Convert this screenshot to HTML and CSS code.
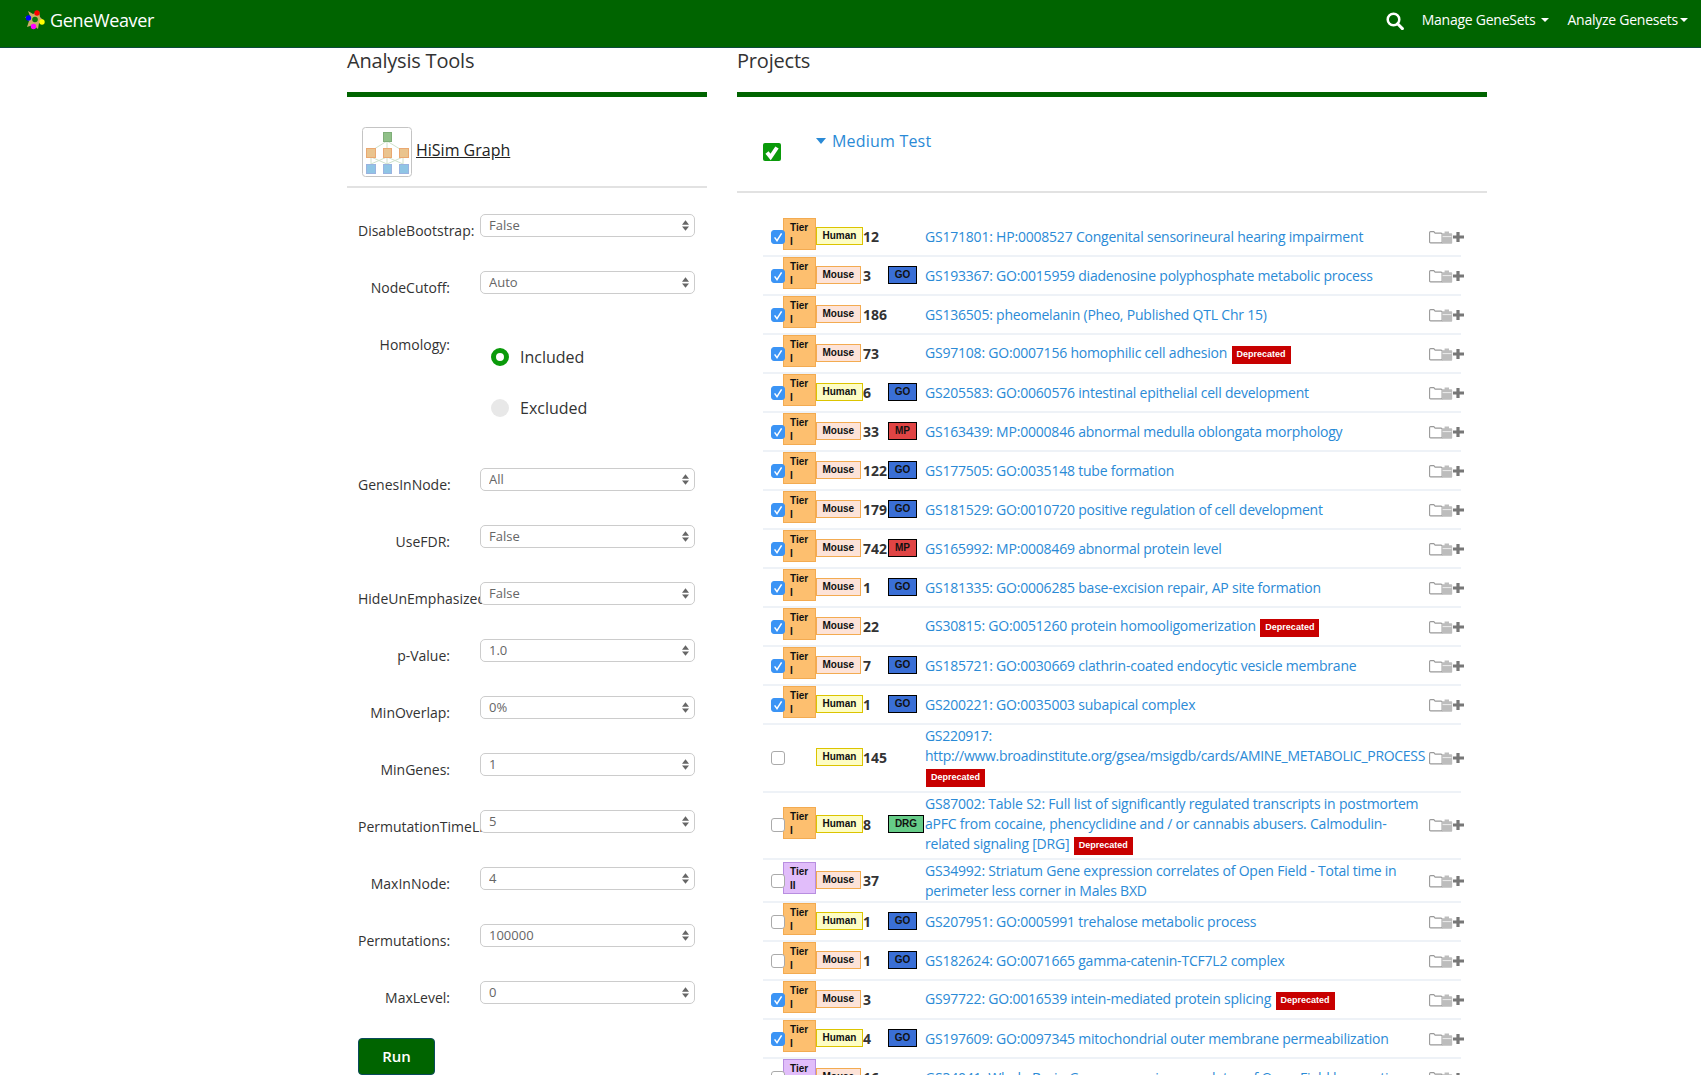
FILE: index.html
```html
<!DOCTYPE html>
<html lang="en">
<head>
<meta charset="utf-8">
<title>GeneWeaver</title>
<link rel="stylesheet" href="styles.css">
</head>
<body>
<svg class="defs" width="0" height="0" aria-hidden="true">
  <symbol id="tick" viewBox="0 0 14 14"><path d="M3.6 7.4 6 10.6 10.6 3.4" fill="none" stroke="#fff" stroke-width="1.5"/></symbol>
  <symbol id="acts" viewBox="0 0 37 14">
    <path d="M.6 12.4V2.6q0-1 1-1h3.2l1.3 1.5h6q1 0 1 1v8.8H1.6q-1 0-1-1.5z" fill="#fff" stroke="#999" stroke-width="1.1"/>
    <path d="M13 3.2h2.6V1.6h4.4v1.6h2.4q.8 0 .8.8v9q0 .8-.8.8H13z" fill="#bdbdbd"/>
    <path d="M13.6 6.6h8.8" stroke="#fff" stroke-width=".7"/>
    <path d="M29 2v10M24 7h11" stroke="#777" stroke-width="3.2"/>
  </symbol>
</svg>
<nav class="navbar">
  <a class="brand">
    <svg class="logo" viewBox="0 0 22 22" width="22" height="22" aria-hidden="true">
      <path d="M4 2 9 5 15 2 16 8 20 12 15 14 14 20 9 16 3 18 5 12 1 8 6 7z" fill="#c9ae67"/>
      <circle cx="13" cy="4" r="2.7" fill="#f00"/>
      <circle cx="4.5" cy="9" r="2.7" fill="#00f"/>
      <circle cx="18" cy="13" r="2.7" fill="#ff0"/>
      <circle cx="9.5" cy="17.5" r="2.7" fill="#f0f"/>
      <circle cx="11" cy="10.5" r="2.8" fill="#0a7a0a"/>
    </svg>
    <span>GeneWeaver</span>
  </a>
  <div class="nav-right">
    <svg class="search" viewBox="0 0 18 18" width="18" height="18" aria-hidden="true">
      <circle cx="7.5" cy="7.5" r="5.8" fill="none" stroke="#fff" stroke-width="2.5"/>
      <path d="M11.6 11.8 16.4 16.6" stroke="#fff" stroke-width="3" stroke-linecap="round"/>
    </svg>
    <a class="nav-link nav-manage">Manage GeneSets<i class="caret"></i></a>
    <a class="nav-link">Analyze Genesets<i class="caret caret-tight"></i></a>
  </div>
</nav>

<main class="page">
  <section class="tools">
    <h2 class="title">Analysis Tools</h2>
    <div class="tool-head">
      <svg class="tool-icon" viewBox="0 0 50 50" width="50" height="50" aria-hidden="true">
        <rect x=".5" y=".5" width="49" height="49" rx="3" fill="#fff" stroke="#c4c4c4"/>
        <path d="M25 14 9 24M25 14V24M25 14 41 24M9 30V37M25 30V37M41 30V37M9 30 25 37M25 30 9 37M25 30 41 37M41 30 25 37" stroke="#cfe2cc" fill="none"/>
        <rect x="21.5" y="5.5" width="8" height="9" fill="#90c088" stroke="#7fae78"/>
        <rect x="4.5" y="21.5" width="9" height="9" fill="#eac48e" stroke="#eaa871"/>
        <rect x="21.5" y="21.5" width="8" height="9" fill="#eac48e" stroke="#eaa871"/>
        <rect x="37.5" y="21.5" width="9" height="9" fill="#eac48e" stroke="#eaa871"/>
        <rect x="4.5" y="37.5" width="9" height="9" fill="#8fc5e5" stroke="#9ab3e0"/>
        <rect x="21.5" y="37.5" width="8" height="9" fill="#8fc5e5" stroke="#9ab3e0"/>
        <rect x="37.5" y="37.5" width="9" height="9" fill="#8fc5e5" stroke="#9ab3e0"/>
      </svg>
      <a class="tool-name">HiSim Graph</a>
    </div>
    <form class="tool-form">
      <div class="field"><label>DisableBootstrap:</label><div class="sel"><select><option>False</option></select><svg class="updown" viewBox="0 0 8 12"><path d="M4 0 8 5H0zM4 12 0 7H8z"/></svg></div></div>
      <div class="field"><label>NodeCutoff:</label><div class="sel"><select><option>Auto</option></select><svg class="updown" viewBox="0 0 8 12"><path d="M4 0 8 5H0zM4 12 0 7H8z"/></svg></div></div>
      <div class="field field-radio">
        <label>Homology:</label>
        <div class="radios">
          <div class="radio"><i class="dot dot-on"></i>Included</div>
          <div class="radio"><i class="dot"></i>Excluded</div>
        </div>
      </div>
      <div class="field"><label>GenesInNode:</label><div class="sel"><select><option>All</option></select><svg class="updown" viewBox="0 0 8 12"><path d="M4 0 8 5H0zM4 12 0 7H8z"/></svg></div></div>
      <div class="field"><label>UseFDR:</label><div class="sel"><select><option>False</option></select><svg class="updown" viewBox="0 0 8 12"><path d="M4 0 8 5H0zM4 12 0 7H8z"/></svg></div></div>
      <div class="field"><label>HideUnEmphasized:</label><div class="sel"><select><option>False</option></select><svg class="updown" viewBox="0 0 8 12"><path d="M4 0 8 5H0zM4 12 0 7H8z"/></svg></div></div>
      <div class="field"><label>p-Value:</label><div class="sel"><select><option>1.0</option></select><svg class="updown" viewBox="0 0 8 12"><path d="M4 0 8 5H0zM4 12 0 7H8z"/></svg></div></div>
      <div class="field"><label>MinOverlap:</label><div class="sel"><select><option>0%</option></select><svg class="updown" viewBox="0 0 8 12"><path d="M4 0 8 5H0zM4 12 0 7H8z"/></svg></div></div>
      <div class="field"><label>MinGenes:</label><div class="sel"><select><option>1</option></select><svg class="updown" viewBox="0 0 8 12"><path d="M4 0 8 5H0zM4 12 0 7H8z"/></svg></div></div>
      <div class="field"><label>PermutationTimeLimit:</label><div class="sel"><select><option>5</option></select><svg class="updown" viewBox="0 0 8 12"><path d="M4 0 8 5H0zM4 12 0 7H8z"/></svg></div></div>
      <div class="field"><label>MaxInNode:</label><div class="sel"><select><option>4</option></select><svg class="updown" viewBox="0 0 8 12"><path d="M4 0 8 5H0zM4 12 0 7H8z"/></svg></div></div>
      <div class="field"><label>Permutations:</label><div class="sel"><select><option>100000</option></select><svg class="updown" viewBox="0 0 8 12"><path d="M4 0 8 5H0zM4 12 0 7H8z"/></svg></div></div>
      <div class="field"><label>MaxLevel:</label><div class="sel"><select><option>0</option></select><svg class="updown" viewBox="0 0 8 12"><path d="M4 0 8 5H0zM4 12 0 7H8z"/></svg></div></div>
      <button class="run" type="button">Run</button>
    </form>
  </section>

  <section class="projects">
    <h2 class="title">Projects</h2>
    <div class="project-head">
      <span class="green-check"><svg viewBox="0 0 18 18" width="18" height="18" aria-hidden="true"><path d="M4 9.5 7.6 14 14 4.5" fill="none" stroke="#fff" stroke-width="4"/></svg></span>
      <a class="project-name"><i class="tri"></i>Medium Test</a>
    </div>
    <div class="rows">
      <div class="row"><span class="cb on"><svg><use href="#tick"/></svg></span><span class="tier t1">Tier I</span><span class="sp human">Human</span><b class="count">12</b><span class="type"></span><div class="gs"><a>GS171801: HP:0008527 Congenital sensorineural hearing impairment</a></div><svg class="acts"><use href="#acts"/></svg></div>
      <div class="row"><span class="cb on"><svg><use href="#tick"/></svg></span><span class="tier t1">Tier I</span><span class="sp mouse">Mouse</span><b class="count">3</b><span class="type"><i class="go">GO</i></span><div class="gs"><a>GS193367: GO:0015959 diadenosine polyphosphate metabolic process</a></div><svg class="acts"><use href="#acts"/></svg></div>
      <div class="row"><span class="cb on"><svg><use href="#tick"/></svg></span><span class="tier t1">Tier I</span><span class="sp mouse">Mouse</span><b class="count">186</b><span class="type"></span><div class="gs"><a>GS136505: pheomelanin (Pheo, Published QTL Chr 15)</a></div><svg class="acts"><use href="#acts"/></svg></div>
      <div class="row"><span class="cb on"><svg><use href="#tick"/></svg></span><span class="tier t1">Tier I</span><span class="sp mouse">Mouse</span><b class="count">73</b><span class="type"></span><div class="gs dep"><a>GS97108: GO:0007156 homophilic cell adhesion</a> <em class="depr">Deprecated</em></div><svg class="acts"><use href="#acts"/></svg></div>
      <div class="row"><span class="cb on"><svg><use href="#tick"/></svg></span><span class="tier t1">Tier I</span><span class="sp human">Human</span><b class="count">6</b><span class="type"><i class="go">GO</i></span><div class="gs"><a>GS205583: GO:0060576 intestinal epithelial cell development</a></div><svg class="acts"><use href="#acts"/></svg></div>
      <div class="row"><span class="cb on"><svg><use href="#tick"/></svg></span><span class="tier t1">Tier I</span><span class="sp mouse">Mouse</span><b class="count">33</b><span class="type"><i class="mp">MP</i></span><div class="gs"><a>GS163439: MP:0000846 abnormal medulla oblongata morphology</a></div><svg class="acts"><use href="#acts"/></svg></div>
      <div class="row"><span class="cb on"><svg><use href="#tick"/></svg></span><span class="tier t1">Tier I</span><span class="sp mouse">Mouse</span><b class="count">122</b><span class="type"><i class="go">GO</i></span><div class="gs"><a>GS177505: GO:0035148 tube formation</a></div><svg class="acts"><use href="#acts"/></svg></div>
      <div class="row"><span class="cb on"><svg><use href="#tick"/></svg></span><span class="tier t1">Tier I</span><span class="sp mouse">Mouse</span><b class="count">179</b><span class="type"><i class="go">GO</i></span><div class="gs"><a>GS181529: GO:0010720 positive regulation of cell development</a></div><svg class="acts"><use href="#acts"/></svg></div>
      <div class="row"><span class="cb on"><svg><use href="#tick"/></svg></span><span class="tier t1">Tier I</span><span class="sp mouse">Mouse</span><b class="count">742</b><span class="type"><i class="mp">MP</i></span><div class="gs"><a>GS165992: MP:0008469 abnormal protein level</a></div><svg class="acts"><use href="#acts"/></svg></div>
      <div class="row"><span class="cb on"><svg><use href="#tick"/></svg></span><span class="tier t1">Tier I</span><span class="sp mouse">Mouse</span><b class="count">1</b><span class="type"><i class="go">GO</i></span><div class="gs"><a>GS181335: GO:0006285 base-excision repair, AP site formation</a></div><svg class="acts"><use href="#acts"/></svg></div>
      <div class="row"><span class="cb on"><svg><use href="#tick"/></svg></span><span class="tier t1">Tier I</span><span class="sp mouse">Mouse</span><b class="count">22</b><span class="type"></span><div class="gs dep"><a>GS30815: GO:0051260 protein homooligomerization</a> <em class="depr">Deprecated</em></div><svg class="acts"><use href="#acts"/></svg></div>
      <div class="row"><span class="cb on"><svg><use href="#tick"/></svg></span><span class="tier t1">Tier I</span><span class="sp mouse">Mouse</span><b class="count">7</b><span class="type"><i class="go">GO</i></span><div class="gs"><a>GS185721: GO:0030669 clathrin-coated endocytic vesicle membrane</a></div><svg class="acts"><use href="#acts"/></svg></div>
      <div class="row"><span class="cb on"><svg><use href="#tick"/></svg></span><span class="tier t1">Tier I</span><span class="sp human">Human</span><b class="count">1</b><span class="type"><i class="go">GO</i></span><div class="gs"><a>GS200221: GO:0035003 subapical complex</a></div><svg class="acts"><use href="#acts"/></svg></div>
      <div class="row"><span class="cb"></span><span class="tier-none"></span><span class="sp human">Human</span><b class="count">145</b><span class="type"></span><div class="gs dep-multi"><a class="gs-url">GS220917: http://www.broadinstitute.org/gsea/msigdb/cards/AMINE_METABOLIC_PROCESS</a> <em class="depr">Deprecated</em></div><svg class="acts"><use href="#acts"/></svg></div>
      <div class="row"><span class="cb"></span><span class="tier t1">Tier I</span><span class="sp human">Human</span><b class="count">8</b><span class="type"><i class="drg">DRG</i></span><div class="gs dep-multi"><a>GS87002: Table S2: Full list of significantly regulated transcripts in postmortem aPFC from cocaine, phencyclidine and / or cannabis abusers. Calmodulin-related signaling [DRG]</a> <em class="depr">Deprecated</em></div><svg class="acts"><use href="#acts"/></svg></div>
      <div class="row"><span class="cb"></span><span class="tier t2">Tier II</span><span class="sp mouse">Mouse</span><b class="count">37</b><span class="type"></span><div class="gs"><a>GS34992: Striatum Gene expression correlates of Open Field - Total time in perimeter less corner in Males BXD</a></div><svg class="acts"><use href="#acts"/></svg></div>
      <div class="row"><span class="cb"></span><span class="tier t1">Tier I</span><span class="sp human">Human</span><b class="count">1</b><span class="type"><i class="go">GO</i></span><div class="gs"><a>GS207951: GO:0005991 trehalose metabolic process</a></div><svg class="acts"><use href="#acts"/></svg></div>
      <div class="row"><span class="cb"></span><span class="tier t1">Tier I</span><span class="sp mouse">Mouse</span><b class="count">1</b><span class="type"><i class="go">GO</i></span><div class="gs"><a>GS182624: GO:0071665 gamma-catenin-TCF7L2 complex</a></div><svg class="acts"><use href="#acts"/></svg></div>
      <div class="row"><span class="cb on"><svg><use href="#tick"/></svg></span><span class="tier t1">Tier I</span><span class="sp mouse">Mouse</span><b class="count">3</b><span class="type"></span><div class="gs dep"><a>GS97722: GO:0016539 intein-mediated protein splicing</a> <em class="depr">Deprecated</em></div><svg class="acts"><use href="#acts"/></svg></div>
      <div class="row"><span class="cb on"><svg><use href="#tick"/></svg></span><span class="tier t1">Tier I</span><span class="sp human">Human</span><b class="count">4</b><span class="type"><i class="go">GO</i></span><div class="gs"><a>GS197609: GO:0097345 mitochondrial outer membrane permeabilization</a></div><svg class="acts"><use href="#acts"/></svg></div>
      <div class="row"><span class="cb"></span><span class="tier t2">Tier II</span><span class="sp mouse">Mouse</span><b class="count">16</b><span class="type"></span><div class="gs"><a>GS34041: Whole Brain Gene expression correlates of Open Field locomotion</a></div><svg class="acts"><use href="#acts"/></svg></div>
    </div>
  </section>
</main>
</body>
</html>
```

FILE: styles.css
```css
* { box-sizing: border-box; }
html, body { margin: 0; height: 1075px; overflow: hidden; background: #fff; }
body { font-family: "Open Sans", sans-serif; font-size: 14px; line-height: 20px; color: #333; }
.defs { position: absolute; }

.navbar { height: 48px; background: #006400; border-bottom: 1px solid #0b4a3c; display: flex; justify-content: space-between; align-items: center; color: #fff; padding: 0 13px 7px 24px; }
.brand { display: flex; align-items: center; gap: 4px; font-size: 18px; letter-spacing: -.35px; color: #fff; }
.logo { display: block; }
.nav-right { display: flex; align-items: center; }
.search { margin-right: 18px; margin-top: 2px; }
.nav-link { display: flex; align-items: center; font-size: 14px; letter-spacing: -.25px; color: #fff; }
.nav-manage { margin-right: 18px; }
.caret { width: 0; height: 0; border: 4px solid transparent; border-top-color: #fff; border-bottom-width: 0; margin-left: 6px; }
.caret-tight { margin-left: 2px; }

.page { display: flex; gap: 30px; padding-left: 347px; }
.tools { width: 360px; }
.projects { width: 750px; }
.title { margin: 0; height: 49px; padding-top: 1px; border-bottom: 5px solid #006400; font-size: 20px; font-weight: 400; line-height: 24px; letter-spacing: -.2px; color: #333; }

.tool-head { display: flex; align-items: center; height: 91px; padding: 30px 0 9px 15px; border-bottom: 2px solid #e2e2e2; }
.tool-icon { display: block; }
.tool-name { margin: -4px 0 0 4px; font-size: 16px; color: #222; text-decoration: underline; }

.tool-form { padding: 26px 0 0 11px; }
.field { display: flex; height: 57px; }
.field > label { width: 92px; flex: none; margin-top: 7px; text-align: right; white-space: nowrap; }
.sel { position: relative; width: 215px; height: 23px; margin-left: 30px; flex: none; }
.sel select { display: block; width: 100%; height: 100%; appearance: none; -webkit-appearance: none; background: #fff; border: 1px solid #ccc; border-radius: 5px; padding: 0 20px 2px 8px; font: 13px/20px "Open Sans", sans-serif; color: #666; }
.updown { position: absolute; right: 6px; top: 6px; width: 7px; height: 11px; fill: #666; pointer-events: none; }
.field-radio { height: 140px; }
.radios { margin-left: 30px; padding: 20px 0 0 11px; }
.radio { display: flex; align-items: center; gap: 11px; height: 18px; margin-bottom: 33px; font-size: 16px; }
.dot { width: 18px; height: 18px; border-radius: 50%; background: #e8e8e8; }
.dot-on { background: #fff; border: 5px solid #0a9a0a; }
.run { display: block; width: 77px; height: 37px; padding: 0 0 2px; background: #006400; border: 1px solid #0b4a5c; border-radius: 4px; color: #fff; font: 600 15px "Open Sans", sans-serif; }

.project-head { display: flex; height: 96px; border-bottom: 2px solid #e2e2e2; padding: 29px 0 0 26px; }
.green-check { display: block; width: 18px; height: 18px; margin-top: 17px; background: #0a9a0a; border-radius: 2px; }
.green-check svg { display: block; }
.project-name { display: flex; align-items: center; height: 24px; margin: 3px 0 0 35px; font-size: 16px; color: #2a8ad6; letter-spacing: .2px; }
.tri { width: 0; height: 0; border: 5.5px solid transparent; border-top: 6px solid #2a8ad6; border-bottom-width: 0; margin-right: 6px; }

.rows { width: 698px; margin: 25px 0 0 26px; }
.row { display: grid; grid-template-columns: 8px 12px 33px 47px 25px 37px 503px 37px; align-items: center; min-height: 39px; border-bottom: 2px solid #eef2f7; }
.cb { grid-column: 2; position: relative; z-index: 1; width: 14px; height: 14px; background: #fff; border: 1px solid #aaa; border-radius: 3px; }
.cb.on { background: #3b94f5; border-color: #3b94f5; }
.cb svg { position: absolute; left: -1px; top: -1px; width: 14px; height: 14px; }
.tier { grid-column: 3; width: 33px; height: 32px; margin-bottom: 5px; padding: 2px 6px 0; border: 1px solid; font: bold 10px/14px "Liberation Sans", sans-serif; color: #111; }
.tier-none { grid-column: 3; }
.t1 { background: #fdbf6f; border-color: #f3ab51; }
.t2 { background: #e1bdfa; border-color: #b88ee0; }
.sp { grid-column: 4; justify-self: start; height: 18px; margin-bottom: 2px; padding: 0 5.5px; border: 1px solid; font: bold 10px/15px "Liberation Sans", sans-serif; color: #111; }
.human { background: #fdfdc4; border-color: #dcc400; }
.mouse { background: #fde3d8; border-color: #f3ab51; }
.count { grid-column: 5; font-size: 14px; font-weight: 700; color: #333; white-space: nowrap; }
.type { grid-column: 6; }
.type i { display: block; width: 29px; height: 18px; margin-bottom: 2px; border: 1px solid #000; font: bold 10px/15px "Liberation Sans", sans-serif; text-align: center; color: #111; }
.type .go { background: #3a6fd6; }
.type .mp { background: #e04444; }
.type .drg { width: 36px; background: #66cc88; }
.gs { grid-column: 7; padding-top: 1px; letter-spacing: -.21px; }
.gs a { color: #2a8ad6; }
.gs .gs-url { letter-spacing: -.31px; }
.gs.dep { padding-bottom: 2px; }
.gs.dep-multi { padding-bottom: 3.5px; }
.depr { display: inline-block; height: 18px; padding: 0 5px; margin-left: 1px; background: #c80000; color: #fff; font: bold 9px/17px "Liberation Sans", sans-serif; letter-spacing: 0; vertical-align: 1px; }
.acts { grid-column: 8; width: 37px; height: 14px; margin-left: 1px; }
```
